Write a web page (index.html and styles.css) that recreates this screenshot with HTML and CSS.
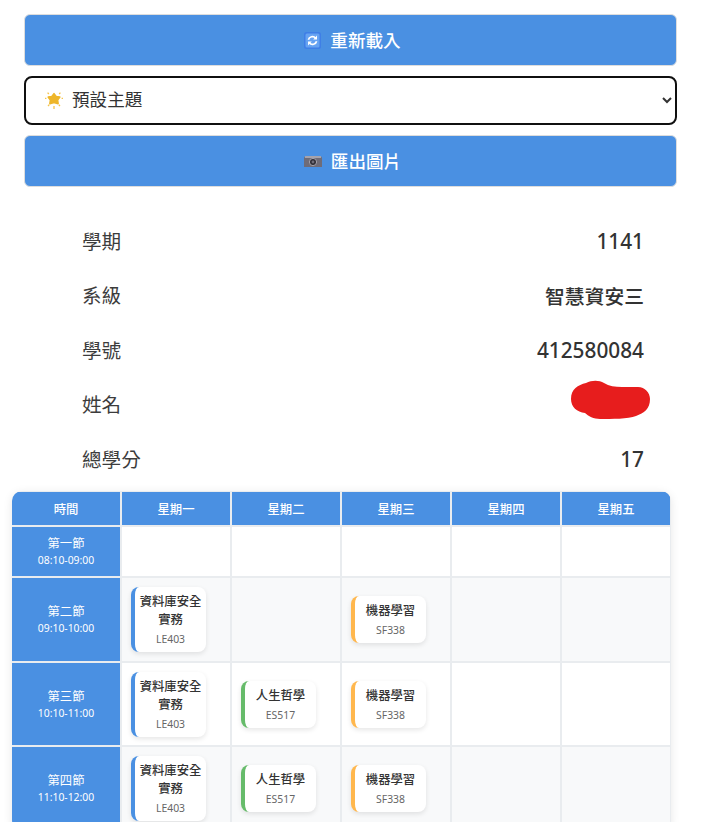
FILE: index.html
```html
<!DOCTYPE html>
<html lang="zh-Hant">
<head>
<meta charset="utf-8">
<title>課表</title>
<link rel="stylesheet" href="styles.css">
</head>
<body>
<div class="controls">
  <button class="action" type="button">
    <svg class="icon" viewBox="0 0 17 17" width="17" height="17"><rect x="0" y="0" width="17" height="17" rx="2.5" fill="#3f7fe6"/><rect x="1.5" y="1.5" width="14" height="14" rx="1.5" fill="#66a3f2"/><path d="M4.4 7.8A4.2 4.2 0 0 1 11.6 6M12.6 9.2A4.2 4.2 0 0 1 5.4 11" fill="none" stroke="#fff" stroke-width="1.7"/><path d="M13 3.6v3.8H9.2zM4 13.4V9.6h3.8z" fill="#fff"/></svg>
    <span>重新載入</span>
  </button>
  <div class="theme">
    <svg class="theme-icon" viewBox="0 0 18 18" width="18" height="18"><path d="M9 2.6l2.1 2.9 3.7.6-2.2 3 .5 3.6L9 11.6l-4.1 1.1.5-3.6-2.2-3 3.7-.6z" fill="#eeb62a" stroke="#eeb62a" stroke-width="1.6" stroke-linejoin="round"/><path d="M9 15v3M2.6 1.6l1.2 1.4M15.4 1.6l-1.2 1.4M0 7.4h1.4M16.6 7.4H18M3 15l1.2-1.2M15 15l-1.2-1.2" stroke="#f5c54e" stroke-width="1.3"/></svg>
    <select class="theme-select"><option>預設主題</option></select>
  </div>
  <button class="action" type="button">
    <svg class="icon" viewBox="0 0 18 12" width="18" height="12"><path d="M0 2.5L1.5 1h15L18 2.5V12H0z" fill="#6f6c78"/><rect x="1" y="1" width="16" height="2" fill="#a5a3ad"/><circle cx="9" cy="7" r="3.6" fill="#2f2d36" stroke="#a5a3ad" stroke-width="1"/><circle cx="9" cy="7" r="1.4" fill="#6f6c78"/></svg>
    <span>匯出圖片</span>
  </button>
</div>

<div class="info">
  <div class="info-row"><span class="info-label">學期</span><span class="info-value num">1141</span></div>
  <div class="info-row"><span class="info-label">系級</span><span class="info-value">智慧資安三</span></div>
  <div class="info-row"><span class="info-label">學號</span><span class="info-value num">412580084</span></div>
  <div class="info-row"><span class="info-label">姓名</span>
    <svg class="scribble" viewBox="0 0 80 40" width="80" height="40"><path d="M1 19C1 9 8 5 16 3 22 0 29 0 34 3 39 6 45 7 52 7H68C75 7 80 13 80 19 80 29 74 33 66 36 58 39 42 39 30 39 24 39 18 36 15 33 7 32 1 27 1 19Z" fill="#e71d1d"/></svg>
  </div>
  <div class="info-row"><span class="info-label">總學分</span><span class="info-value num">17</span></div>
</div>

<div class="timetable">
  <div class="cell head">時間</div>
  <div class="cell head">星期一</div>
  <div class="cell head">星期二</div>
  <div class="cell head">星期三</div>
  <div class="cell head">星期四</div>
  <div class="cell head">星期五</div>

  <div class="cell period"><span>第一節</span><span>08:10-09:00</span></div>
  <div class="cell slot"></div><div class="cell slot"></div><div class="cell slot"></div><div class="cell slot"></div><div class="cell slot"></div>

  <div class="cell period"><span>第二節</span><span>09:10-10:00</span></div>
  <div class="cell slot alt"><div class="course blue"><div class="course-name">資料庫安全實務</div><div class="course-room">LE403</div></div></div>
  <div class="cell slot alt"></div>
  <div class="cell slot alt"><div class="course orange"><div class="course-name">機器學習</div><div class="course-room">SF338</div></div></div>
  <div class="cell slot alt"></div><div class="cell slot alt"></div>

  <div class="cell period"><span>第三節</span><span>10:10-11:00</span></div>
  <div class="cell slot"><div class="course blue"><div class="course-name">資料庫安全實務</div><div class="course-room">LE403</div></div></div>
  <div class="cell slot"><div class="course green"><div class="course-name">人生哲學</div><div class="course-room">ES517</div></div></div>
  <div class="cell slot"><div class="course orange"><div class="course-name">機器學習</div><div class="course-room">SF338</div></div></div>
  <div class="cell slot"></div><div class="cell slot"></div>

  <div class="cell period"><span>第四節</span><span>11:10-12:00</span></div>
  <div class="cell slot alt"><div class="course blue"><div class="course-name">資料庫安全實務</div><div class="course-room">LE403</div></div></div>
  <div class="cell slot alt"><div class="course green"><div class="course-name">人生哲學</div><div class="course-room">ES517</div></div></div>
  <div class="cell slot alt"><div class="course orange"><div class="course-name">機器學習</div><div class="course-room">SF338</div></div></div>
  <div class="cell slot alt"></div><div class="cell slot alt"></div>
</div>
</body>
</html>
```
FILE: styles.css
```css
html, body {
  margin: 0;
  height: 822px;
  overflow: hidden;
  background: #fff;
}
body {
  font-family: "Noto Sans", "Noto Sans CJK TC", sans-serif;
  color: #333;
}
.controls {
  display: flex;
  flex-direction: column;
  gap: 10px;
  margin: 14px 33px 0 24px;
}
.action {
  display: flex;
  align-items: center;
  justify-content: center;
  gap: 9px;
  height: 52px;
  border: 1px solid #ddd;
  border-radius: 6px;
  background: #4a90e2;
  color: #fff;
  font: 500 17.6px "Noto Sans", "Noto Sans CJK TC", sans-serif;
  padding: 0;
}
.action span { margin-bottom: 2px; }
.icon { margin-left: 4px; }
.theme { position: relative; }
.theme-icon {
  position: absolute;
  left: 21px;
  top: 15px;
  pointer-events: none;
}
.theme-select {
  display: block;
  width: 100%;
  height: 49px;
  padding: 0 0 3px 42px;
  border: 2px solid #101010;
  border-radius: 8px;
  background: #fff;
  color: #333;
  font: 400 17.6px "Noto Sans", "Noto Sans CJK TC", sans-serif;
}
.info {
  margin: 26px 66px 0 82px;
}
.info-row {
  position: relative;
  display: flex;
  align-items: center;
  justify-content: space-between;
  height: 54.5px;
  font-size: 19.6px;
}
.info-label { color: #3c3c3c; }
.info-value {
  padding-top: 1px;
  font-size: 19.8px;
  font-weight: 500;
}
.info-value.num { font-size: 20.8px; }
.scribble {
  position: absolute;
  right: -6px;
  top: 3.75px;
}
.timetable {
  display: grid;
  grid-template-columns: repeat(6, 108px);
  gap: 2px;
  width: 658px;
  margin: 5.75px 0 0 12px;
  padding: 1px 1px 0 0;
  background: #e9ecef;
  border-radius: 10px;
  overflow: hidden;
  box-shadow: 0 2px 10px rgba(0, 0, 0, 0.1);
  font-size: 12.35px;
}
.cell {
  display: flex;
  min-height: 49px;
}
.head {
  min-height: 33px;
  align-items: center;
  justify-content: center;
  background: #4a90e2;
  color: #fff;
  font-weight: 500;
}
.period {
  flex-direction: column;
  align-items: center;
  justify-content: center;
  padding-top: 1px;
  box-sizing: border-box;
  background: #4a90e2;
  color: #fff;
  line-height: 17px;
}
.period span:last-child { font-size: 10.4px; }
.slot {
  align-items: center;
  padding: 8.75px 9px;
  background: #fff;
  box-sizing: border-box;
}
.slot.alt { background: #f8f9fa; }
.course {
  box-sizing: border-box;
  width: 75px;
  padding: 6px 4px;
  border-left: 4px solid #4a90e2;
  border-radius: 8px;
  background: #fff;
  box-shadow: 0 2px 5px rgba(0, 0, 0, 0.1);
  text-align: center;
}
.course.green { border-left-color: #66bb6a; }
.course.orange { border-left-color: #ffb74d; }
.course-name {
  color: #333;
  font-weight: 500;
  line-height: 18px;
}
.course-room {
  margin-top: 3px;
  color: #666;
  font-size: 10.4px;
  line-height: 14px;
}
```
